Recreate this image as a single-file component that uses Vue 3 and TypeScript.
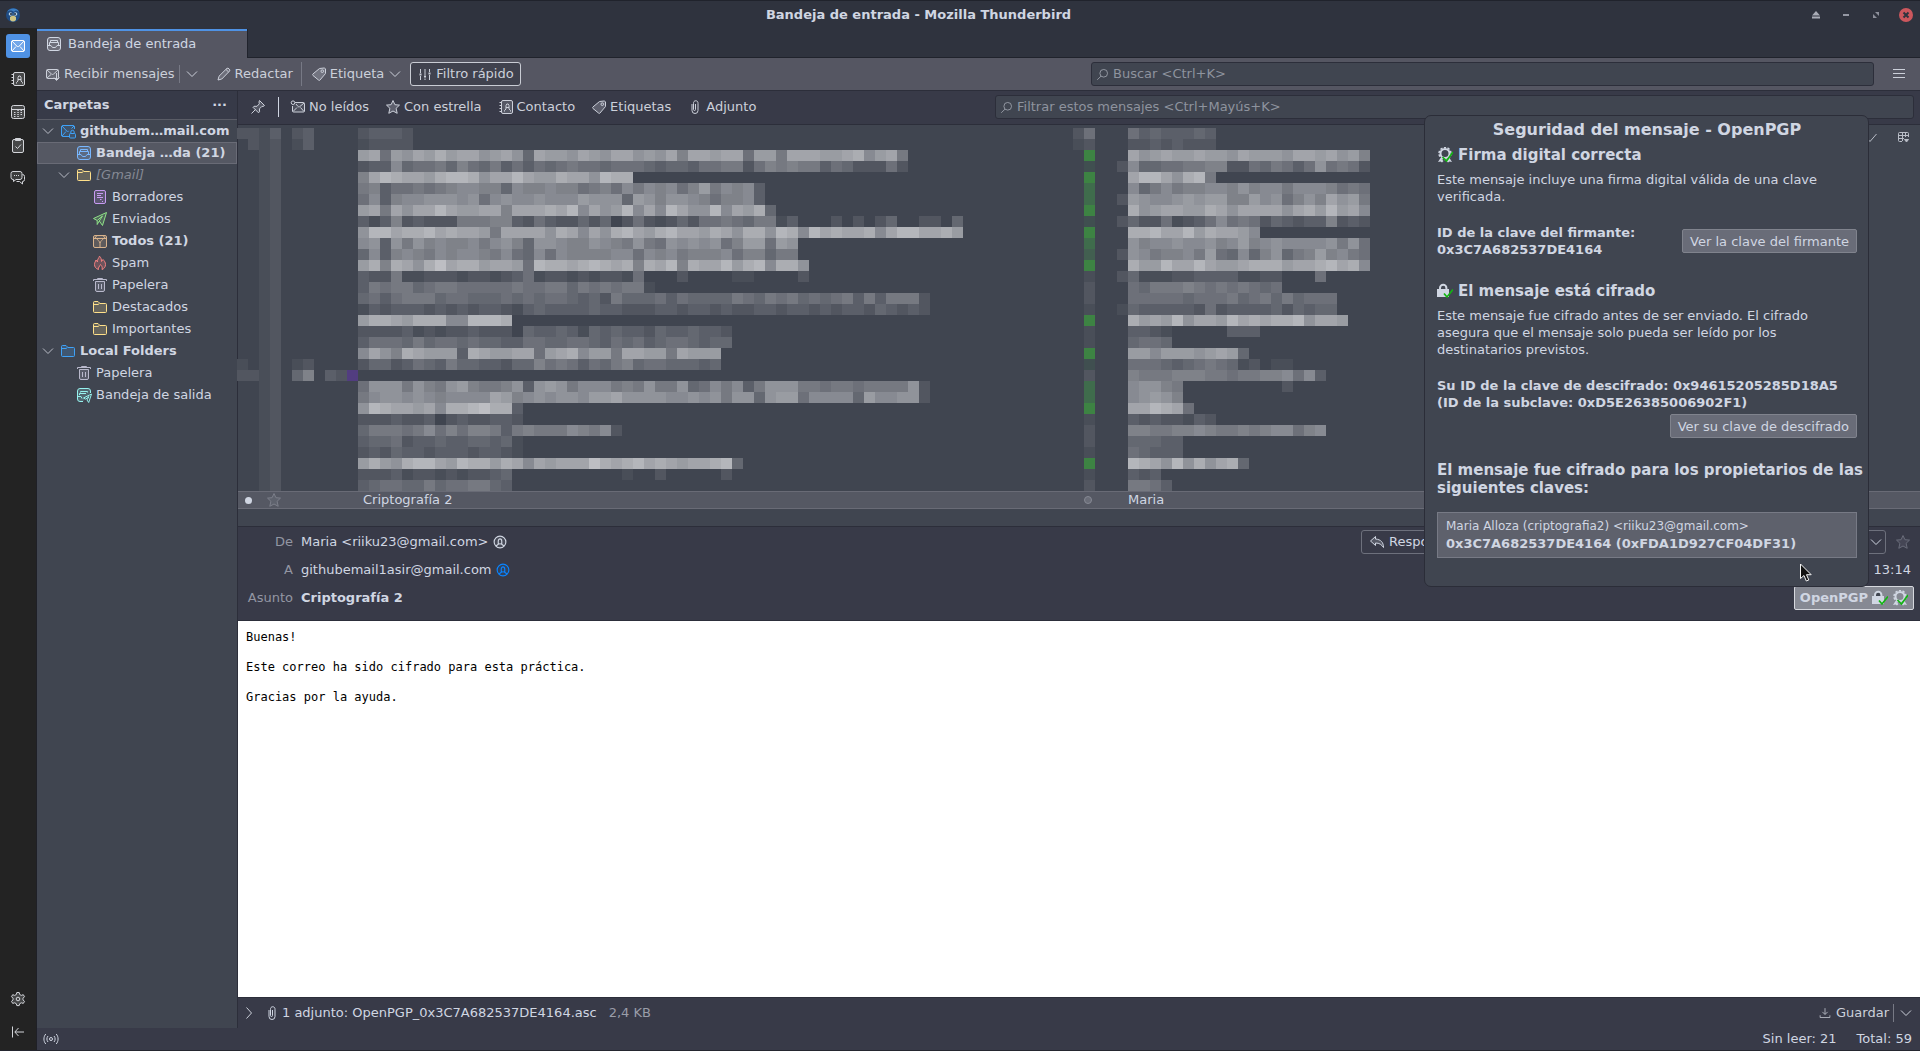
<script setup lang="ts">
import { h } from 'vue'

const glyphs: Record<string, string> = {
  mail: '<rect x="1.5" y="2.5" width="13" height="11" rx="1.5" fill-opacity=".2"/><path d="M2 3l4.7 5c.8.8 1.8.8 2.6 0L14 3M2 13l4-4.500M14 13l-4-4.500" fill="none"/>',
  contacts: '<rect x="3.500" y="1.500" width="11" height="13" rx="1.500" fill-opacity=".2"/><path d="M1.500 3.500h2M1.500 6.500h2M1.500 9.500h2M1.500 12.500h2M6.500 12.500v-1l1.500-1.500V6.500l.8-1.500h1.400l.8 1.500V10l1.500 1.500v1M8 8.500h3" fill="none"/>',
  calendar: '<rect x="1.500" y="1.500" width="13" height="13" rx="2" fill-opacity=".2"/><path d="M2 5.500h12" fill="none"/><path d="M4 8.500h1.500M7.300 8.500h1.500M10.500 8.500H12M4 10.500h1.500M7.300 10.500h1.500M10.500 10.500H12M4 12.500h1.500M7.300 12.500h1.500M7.300 6.500h1.500M10.500 6.500H12" fill="none"/>',
  tasks: '<rect x="2.500" y="2.500" width="11" height="13" rx="1.500" fill-opacity=".2"/><path d="M5.500 3.500v-2h5v2z" /><path d="M5.500 9.500l2 2 3.500-4" fill="none"/>',
  chat: '<path d="M3 1.500h7a2 2 0 0 1 2 2v4a2 2 0 0 1-2 2H6l-2.500 2v-2H3a2 2 0 0 1-2-2v-4a2 2 0 0 1 2-2z" fill-opacity=".15"/><path d="M12.500 4.500a2 2 0 0 1 2 2v3a2 2 0 0 1-2 2v2.500l-3-2.500h-3M4 5.500h1M6 5.500h1M8 5.500h1" fill="none"/>',
  gear: '<path d="M6.800 1.500h2.400l.5 2 1.600.9 2-.7 1.200 2-1.500 1.500v1.700l1.500 1.500-1.200 2-2-.6-1.600.9-.5 1.900H6.800l-.5-1.900-1.600-.9-2 .6-1.200-2L3 8.900V7.200L1.500 5.700l1.200-2 2 .7 1.600-.9z" fill-opacity=".2"/><circle cx="8" cy="8" r="1.800" fill="none"/>',
  collapse: '<path d="M2.500 2.500v11M14 8H5M8.500 4L4.800 8l3.700 4" fill="none"/>',
  inbox: '<rect x="1.500" y="1.500" width="13" height="13" rx="2.500" fill-opacity=".2"/><path d="M1.500 9.500h3.500l1.500 2h3l1.500-2h3.500M3.500 9V6.500h9V9M4.500 6V4.500h7V6" fill="none"/>',
  receive: '<rect x="1.500" y="3.500" width="12" height="9" rx="1" fill-opacity=".15"/><path d="M2 4l4.500 4c.6.600 1.500.600 2.100 0L13 4M2 12l4-3.500M11.500 7v7M9 11.500l2.500 3 3-3" fill="none"/>',
  pencil: '<path d="M2 14l1-3.800L11 2.300c1-.9 3.600 1.500 2.700 2.600L5.800 13 2 14zM10 3.500L12.600 6" fill-opacity=".2"/>',
  tag: '<path d="M8.500 2.500l4.500-.5c.6 0 1.500.5 1.500 1v4.500L9 14c-.5.600-1 .600-1.500 0L2 9.500c-.6-.6-.6-1 0-1.600z" fill-opacity=".25"/><circle cx="11.300" cy="5.200" r="1.300" fill="none"/>',
  filter: '<path d="M3.500 3v4M3.500 10v4M8 3v6M8 12.500V14M12.500 3v3M12.500 9v5" fill="none"/><path d="M2.500 8.500h2M7 10.500h2M11.500 7.500h2" fill="none" stroke-width="2"/>',
  down: '<path d="M3 5.500l5 5 5-5" fill="none"/>',
  right: '<path d="M5.500 2.500l5 5.500-5 5.500" fill="none"/>',
  pin: '<path d="M9.500 1.500l5 5-1.500 1-1-.2-2.500 2.500v3l-1 1L3 8.300l1-1h3l2.300-2.500-.3-1.800zM5.500 10.500L1.500 14.500" fill-opacity=".2"/>',
  unread: '<path d="M5 3.500h8.500c.6 0 1 .4 1 1v7.500c0 .6-.4 1-1 1h-10c-.6 0-1-.4-1-1V7" fill-opacity=".15"/><path d="M6 5l2 2.500c.6.500 1.300.500 1.900 0L14 4M3 12.500l4-4M14 12.500l-3.500-4" fill="none"/><circle cx="3" cy="3.700" r="1.800" fill="none"/>',
  star: '<path d="M8 1.500l1.900 4.200 4.600.4-3.400 3.200 1.100 5L8 12l-4.200 2.300 1.100-5L1.500 6.100l4.600-.4z" fill-opacity=".25"/>',
  clip: '<path d="M8.500 5v5.500a1 1 0 0 1-2 0V4.500a3 3 0 0 1 .5-2c.9-1 2.600-1 3.500 0 .4.500.5 1 .5 2v7a3 3 0 0 1-6 0V5" fill="none"/>',
  search: '<circle cx="9.500" cy="6.500" r="4.700" fill="none"/><path d="M6.200 10L1.500 14.500" fill="none"/>',
  menu: '<path d="M2 3.500h12M2 7.500h12M2 11.500h12" fill="none"/>',
  account: '<path d="M9 13.500H3a1.500 1.500 0 0 1-1.500-1.500V4A1.500 1.500 0 0 1 3 2.500h10A1.500 1.500 0 0 1 14.500 4v2" fill-opacity=".15"/><path d="M2 3l4.700 5c.6.600 1.500.600 2 .200M2 13l4-4.500M14 3l-2.500 2.500" fill="none"/><rect x="9.500" y="10.500" width="6" height="4.500" rx="1" fill-opacity=".15"/><path d="M10.800 10.500V9a1.700 1.700 0 0 1 3.400 0v1.500" fill="none"/>',
  folder: '<path d="M1.500 3.500a1 1 0 0 1 1-1H6l2 2h5.500a1 1 0 0 1 1 1v7a1 1 0 0 1-1 1h-11a1 1 0 0 1-1-1z" fill-opacity=".2"/><path d="M2 5.500h4l1.500-1" fill="none"/>',
  drafts: '<rect x="2.500" y="1.500" width="11" height="13" rx="1.500" fill-opacity=".2"/><path d="M5 4.500h6M5 6.500h4M5 8.500h6M8 10.500h1.500M10 12.500h1" fill="none"/>',
  sent: '<path d="M14.500 1.500L1.500 7.500l3.700 2L10.500 5 7.300 10l3.200 4.500z" fill-opacity=".2"/><path d="M5.200 9.500v4l2-3.500" fill="none"/>',
  archive: '<rect x="1.500" y="2.500" width="13" height="12" rx="1.500" fill-opacity=".2"/><path d="M2 5.500h12M3 5l1.500-2M13 5l-1.500-2M5 5.500c0 2 3 2.500 3 4.500M11 5.500c0 2-3 2.500-3 4.500M8 10v4.500" fill="none"/>',
  spam: '<path d="M6.500 14.500C3.500 13.500 2.500 11.500 2.500 9.500c0-2 1-3 1.500-4.500l1.500 2C5 4.500 7 3 7.500 1.200c1.500 1.300 2 3.300 2 5.300l1.500-2c1.500 1.500 2.500 3 2.500 5 0 2.500-1.500 4.300-3.500 5 .8-2.500-.5-3.500-1.500-5-1 2-2.500 3-2 5z" fill-opacity=".25"/>',
  trash: '<path d="M3.500 4.500h9v8.500a1.500 1.500 0 0 1-1.500 1.500H5A1.500 1.500 0 0 1 3.500 13z" fill-opacity=".2"/><path d="M1.500 4V2.500h13V4M5.500 2V1.500h5V2M6.500 7v5M9.500 7v5" fill="none"/>',
  outbox: '<path d="M7 14.500H4A2.500 2.500 0 0 1 1.500 12V4A2.500 2.500 0 0 1 4 1.500h8A2.500 2.500 0 0 1 14.500 4v2" fill-opacity=".2"/><path d="M2 9.500h3l1 2M3.500 8V6.500H10M4.500 5.500v-1h7v1M15.500 7l-8 4 2.200 1.200L13 9.500l-2 3.500 1.700 2.500z" fill="none"/>',
  person: '<circle cx="8" cy="8" r="6.700" fill-opacity=".1"/><path d="M3.500 12.500l2.500-2V7c0-3.500 4-3.500 4 0v3.500l2.500 2M6 10.500c1.300-.6 2.700-.6 4 0" fill="none"/>',
  reply: '<path d="M6.500 2.500L1.500 7l5 4.500V9c4 0 6 1.500 8 4.500 0-5-2.500-8-8-8.500z" fill-opacity=".2"/>',
  save: '<path d="M8 1.500v8M4.500 6.500L8 10l3.500-3.500M1.500 11v3h13v-3" fill="none"/>',
  sync: '<circle cx="8" cy="8" r="1.500" fill="none"/><path d="M5 5c-1.500 1.800-1.500 4.200 0 6M11 5c1.500 1.800 1.500 4.200 0 6M2.800 3C.3 5.800.3 10.200 2.800 13M13.200 3c2.500 2.800 2.500 7.200 0 10" fill="none"/>',
  columns: '<path d="M7 12.500H4.500a1 1 0 0 1-1-1v-7a1 1 0 0 1 1-1h8a1 1 0 0 1 1 1V8M4 6.500h9M7.500 4v8M10.500 4v4M4 9.500h5" fill="none"/><path d="M9.500 10.500h4L11.500 13z"/>',
  check: '<path d="M6 9.500l3 3L15.500 5" fill="none"/>',
  lock: '<g stroke="none"><path d="M0 6h2V5a4.200 4.200 0 0 1 8.400 0v1H12v8H0z"/></g><path d="M4 6V5a2.200 2.200 0 0 1 4.400 0v1z" stroke="none" fill="#404550"/><path d="M7 10.500l3 3.500L16 6.500" fill="none" stroke="#12b512" stroke-width="1.700"/>',
  seal: '<circle cx="8" cy="6.500" r="4.500" fill="none" stroke-width="2"/><circle cx="8" cy="6.500" r="6" fill="none" stroke-width="1.500" stroke-dasharray="2.300 1.470"/><path d="M1 15l2.500-4 3 3-1.500 1.500-1.500-1zM15 15l-2.500-4-3 3 1.500 1.500 1.500-1z" stroke="none"/><path d="M5.500 10l4 4L16 5" fill="none" stroke="#12b512" stroke-width="1.700"/>'
}

const Icon = (props: { name: string }) =>
  h('svg', { class: 'icon', viewBox: '0 0 16 16', 'aria-hidden': 'true', innerHTML: glyphs[props.name] })
Icon.props = ['name']

const spaces = ['mail', 'contacts', 'calendar', 'tasks', 'chat']

interface Folder { name: string; icon: string; tint: string; level: number; open?: boolean; bold?: boolean; active?: boolean; faded?: boolean }
const folders: Folder[] = [
  { name: 'githubem…mail.com', icon: 'account', tint: '#3fa2f7', level: 0, open: true, bold: true },
  { name: 'Bandeja …da (21)', icon: 'inbox', tint: '#78b7ff', level: 1, bold: true, active: true },
  { name: '[Gmail]', icon: 'folder', tint: '#ffe08a', level: 1, open: true, faded: true },
  { name: 'Borradores', icon: 'drafts', tint: '#c79bf2', level: 2 },
  { name: 'Enviados', icon: 'sent', tint: '#8fe388', level: 2 },
  { name: 'Todos (21)', icon: 'archive', tint: '#d9b38c', level: 2, bold: true },
  { name: 'Spam', icon: 'spam', tint: '#f28080', level: 2 },
  { name: 'Papelera', icon: 'trash', tint: '#b9b9cc', level: 2 },
  { name: 'Destacados', icon: 'folder', tint: '#ffe08a', level: 2 },
  { name: 'Importantes', icon: 'folder', tint: '#ffe08a', level: 2 },
  { name: 'Local Folders', icon: 'folder', tint: '#3fa2f7', level: 0, open: true, bold: true },
  { name: 'Papelera', icon: 'trash', tint: '#b9b9cc', level: 1 },
  { name: 'Bandeja de salida', icon: 'outbox', tint: '#96f2ee', level: 1 }
]

const filters = [
  { name: 'No leídos', icon: 'unread' },
  { name: 'Con estrella', icon: 'star' },
  { name: 'Contacto', icon: 'contacts' },
  { name: 'Etiquetas', icon: 'tag' },
  { name: 'Adjunto', icon: 'clip' }
]

// Censored rows: flag columns | subject | state column | sender column.
// Hex digits are brightness steps, 0 leaves the list background.
const cell = 11
const flagsDefault = '0012'
const censored: [string, string, string, string][] = [
  ['2213023', '23332', '25', '053433343'],
  ['0212013', '12222', '12', '022323222'],
  ['', 'ab5a9bacabb9ab94baa9ba9bb9a9b7bbabb5aa6bbbaabc8ab6', '0G', '0b9abaabaa9baaa9bbab9a7'],
  ['', '23384556475463535456554555434435566257676635422252', '0d', '28445566772254653595652'],
  ['', '7bdcbbacddc9bbdbaacbb9dcc', '0G', '0bddb9cd6'],
  ['', '6735565678877487787756758687857a68783', '0m', '08468677887978868887565'],
  ['', '58378899989589889888a9994a97998757783', '0m', '2a9889a9aa77a895797b9a6'],
  ['', 'ab6b9bbdbaabb7bbbcbd8b9ad8b8db99d8bac4', '0G', '0c9abbaacb9bbbb9bcadab8'],
  ['', '3137232226667732532242402521242556546613000202024002204', '0d', '24225123585652432337232'],
  ['', '9ddbccdbcbba6bbbb9cb8b9cdbacdbbacb9cc9dc8dbcbbc8bddbbca', '0G', '0ccdbbdacbba8'],
  ['', '89396978778689749987798769659898957aa5a9', '0m', '09788988978a78988889695'],
  ['', '4837876878876854858777788587867778577466', '0e', '29867786a548479467a7862'.slice(0, 22) + '5'],
  ['', 'ac7cb9cebccabba5dccbcdcbc7cbd7cbbdacd8cc9', '0G', '0caadbbdbaabcccabbcdbc8'],
  ['', '32261122212212351221212215000200001100002', '01', '2411122333311220005'],
  ['', '365664566555556556646565661', '02', '054666765656545'],
  ['', '4535666455444545455434264445354444654656454563636662', '02', '05555545556456464555'],
  ['', '1323332323233213433334332223323323223323323233243232', '01', '14333332523333424344'],
  ['', 'accbaccc88dddc', '0G', '0cabad9bbadbcbccd9bba'],
  ['', '2222312122322204334314343324334332', '01', '0332100000333'],
  ['', '3555464554544335544554354534554344', '01', '04554'],
  ['', '8b97cbaaa3cbaabb5abc8aa6bbaa6baaa', '0G', '0aa8aaa9aba4'],
  ['1012012', '244235436443324475653546745544434', '0d', '0555434565412011'],
  ['22120470320', '', '02', '0766677766566778583'],
  ['', '599969769a7667939a968886769669458683699966566566669 2'.replace(' ', '').slice(0, 52), '0m', '089976000000000200'],
  ['', '689989878888ba7898998aab99998898969949aa588884a88992', '0m', '089a97'],
  ['', '9dcbbab8ccdecc3', '0G', '0bbdcb5'],
  ['', '222322302322332', '01', '032322132'],
  ['', '466656857577636766687682', '02', '0776677876676788578'],
  ['', '344523343344341', '02', '044433'],
  ['', '232433233323321', '01', '054333'],
  ['', 'aca9cddbadccacb8babbbecbcdbcbabbcd4', '0G', '0dcb9d9c9bc4'],
  ['', '2223122121223400000000001002000002', '01', '0323'],
  ['', '34554464556643', '02', '06653']
]

const states: Record<string, string> = { G: '#3d8343', m: '#3f6c4c', e: '#425f50', d: '#404f50' }
const mix = (a: number, b: number, n: number) => Math.round(a + ((b - a) * n) / 15)
function tone(ch: string) {
  const n = parseInt(ch, 16)
  return `rgb(${mix(64, 198, n)},${mix(69, 199, n)},${mix(80, 203, n)})`
}

const blocks: { x: number; y: number; fill: string }[] = []
censored.forEach(([flags, subject, state, sender], row) => {
  const put = (start: number, text: string) =>
    [...text].forEach((ch, i) => {
      if (ch !== '0') {
        const fill = start === 76 && states[ch] ? states[ch] : tone(ch)
        blocks.push({ x: (start + i) * cell, y: row * cell, fill })
      }
    })
  put(0, flags || flagsDefault)
  put(11, subject)
  put(76, state)
  put(80, sender)
})
blocks.push({ x: 10 * cell, y: 22 * cell, fill: '#523d80' })
</script>

<template>
  <div class="window">
    <header class="titlebar">
      <svg class="logo" viewBox="0 0 16 16" aria-hidden="true">
        <circle cx="8" cy="8" r="7" fill="#1f4c84" />
        <path d="M2 5C4 1 12 0 14 5c-2-2-4-2-5 0C7 3 4 3 2 5z" fill="#3c7fc4" />
        <circle cx="5.500" cy="7" r="1.800" fill="#b9d3e6" />
        <circle cx="10.500" cy="7" r="1.800" fill="#b9d3e6" />
        <circle cx="6" cy="7" r="1" fill="#15243c" />
        <circle cx="10" cy="7" r="1" fill="#15243c" />
        <path d="M5 10c2-2 4-2 6 0v3c-2 2-4 2-6 0z" fill="#cdc384" />
      </svg>
      <h1>Bandeja de entrada - Mozilla Thunderbird</h1>
      <div class="window-buttons">
        <button aria-label="Ocultar"><svg viewBox="0 0 16 16"><path d="M8 4l4 4.500H4zM4 9.500h8v2H4z" fill="#a9acb6" /></svg></button>
        <button aria-label="Minimizar"><svg viewBox="0 0 16 16"><path d="M5 7h6v2H5z" fill="#9598a3" /></svg></button>
        <button aria-label="Maximizar"><svg viewBox="0 0 16 16"><path d="M7 5h4v4zM5 7v4h4z" fill="#8c8f9a" /></svg></button>
        <button aria-label="Cerrar"><svg viewBox="0 0 16 16"><circle cx="8" cy="8" r="7" fill="#cc575d" /><path d="M5.500 5.500l5 5m0-5l-5 5" stroke="#2f343f" stroke-width="2" /></svg></button>
      </div>
    </header>

    <div class="shell">
      <nav class="spaces">
        <button v-for="(s, i) in spaces" :key="s" :class="{ on: i === 0 }" :aria-label="s"><Icon :name="s" /></button>
        <span class="grow"></span>
        <button aria-label="Ajustes"><Icon name="gear" /></button>
        <button aria-label="Contraer"><Icon name="collapse" /></button>
      </nav>

      <div class="workspace">
        <div class="tabs">
          <button class="tab"><Icon name="inbox" />Bandeja de entrada</button>
        </div>

        <div class="toolbar">
          <div class="tools">
            <button class="tool"><Icon name="receive" />Recibir mensajes</button>
            <i class="rule short"></i>
            <button class="tool" aria-label="Más opciones"><Icon name="down" /></button>
            <button class="tool write"><Icon name="pencil" />Redactar</button>
            <i class="rule"></i>
            <button class="tool label"><Icon name="tag" />Etiqueta<Icon name="down" /></button>
            <button class="tool boxed"><Icon name="filter" />Filtro rápido</button>
          </div>
          <label class="field"><Icon name="search" /><input type="text" aria-label="Buscar" placeholder="Buscar &lt;Ctrl+K&gt;" /></label>
          <button class="tool burger" aria-label="Menú"><Icon name="menu" /></button>
        </div>

        <div class="columns">
          <aside class="folders">
            <div class="folders-head"><h2>Carpetas</h2><button aria-label="Opciones">···</button></div>
            <ul>
              <li v-for="(f, i) in folders" :key="i" :class="['l' + f.level, { active: f.active, bold: f.bold, faded: f.faded }]">
                <span class="twisty"><Icon v-if="f.open" name="down" /></span>
                <Icon :name="f.icon" :style="{ color: f.tint }" />
                <span>{{ f.name }}</span>
              </li>
            </ul>
          </aside>

          <main class="mail">
            <div class="quickbar">
              <button class="tool" aria-label="Fijar"><Icon name="pin" /></button>
              <i class="rule bright"></i>
              <div class="filters">
                <button v-for="f in filters" :key="f.name" class="tool"><Icon :name="f.icon" />{{ f.name }}</button>
              </div>
              <label class="field"><Icon name="search" /><input type="text" aria-label="Filtrar" placeholder="Filtrar estos mensajes &lt;Ctrl+Mayús+K&gt;" /></label>
            </div>

            <div class="list">
              <svg class="mosaic" width="1133" height="363" viewBox="0 0 1133 363" shape-rendering="crispEdges" aria-hidden="true">
                <rect v-for="(b, i) in blocks" :key="i" :x="b.x" :y="b.y" :width="cell" :height="cell" :fill="b.fill" />
              </svg>
              <div class="pickers"><Icon name="check" /><Icon name="columns" /></div>
            </div>
            <table class="rows">
              <tbody>
                <tr>
                  <td class="c-dot"><i class="dot"></i></td>
                  <td class="c-star"><Icon name="star" /></td>
                  <td class="c-subject">Criptografía 2</td>
                  <td class="c-state"><i class="ring"></i></td>
                  <td>Maria</td>
                </tr>
              </tbody>
            </table>
            <div class="splitter"></div>

            <section class="head">
              <div class="line">
                <span class="key">De</span><span>Maria &lt;riiku23@gmail.com&gt;</span><Icon name="person" />
                <span class="grow"></span>
                <div class="actions">
                  <button class="answer"><Icon name="reply" /><span>Respo</span></button>
                  <button class="more" aria-label="Más"><Icon name="down" /></button>
                </div>
                <Icon name="star" class="fav" />
              </div>
              <div class="line">
                <span class="key">A</span><span>githubemail1asir@gmail.com</span><Icon name="person" class="known" />
                <span class="grow"></span><time>13:14</time>
              </div>
              <div class="line">
                <span class="key">Asunto</span><strong>Criptografía 2</strong>
                <span class="grow"></span>
                <button class="pgp">OpenPGP<Icon name="lock" /><Icon name="seal" /></button>
              </div>
            </section>

            <article class="body">
              <p>Buenas!</p>
              <p>Este correo ha sido cifrado para esta práctica.</p>
              <p>Gracias por la ayuda.</p>
            </article>

            <footer class="attach">
              <button class="tool" aria-label="Mostrar"><Icon name="right" /></button>
              <Icon name="clip" class="clip" />
              <span>1 adjunto: OpenPGP_0x3C7A682537DE4164.asc</span>
              <span class="size">2,4 KB</span>
              <span class="grow"></span>
              <button class="tool save"><Icon name="save" />Guardar</button>
              <i class="rule short"></i>
              <button class="tool" aria-label="Más opciones"><Icon name="down" /></button>
            </footer>
          </main>
        </div>

        <div class="status"><Icon name="sync" /><span class="grow"></span><span>Sin leer: 21</span><span>Total: 59</span></div>
      </div>
    </div>

    <section class="popup">
      <h2>Seguridad del mensaje - OpenPGP</h2>
      <h3><Icon name="seal" />Firma digital correcta</h3>
      <p>Este mensaje incluye una firma digital válida de una clave verificada.</p>
      <div class="signer">
        <p class="id">ID de la clave del firmante:<br />0x3C7A682537DE4164</p>
        <button>Ver la clave del firmante</button>
      </div>
      <h3><Icon name="lock" />El mensaje está cifrado</h3>
      <p>Este mensaje fue cifrado antes de ser enviado. El cifrado asegura que el mensaje solo pueda ser leído por los destinatarios previstos.</p>
      <p class="id own">Su ID de la clave de descifrado: 0x94615205285D18A5<br />(ID de la subclave: 0xD5E26385006902F1)</p>
      <button class="right">Ver su clave de descifrado</button>
      <h4>El mensaje fue cifrado para los propietarios de las siguientes claves:</h4>
      <div class="keybox">
        <span>Maria Alloza (criptografia2) &lt;riiku23@gmail.com&gt;</span>
        <strong>0x3C7A682537DE4164 (0xFDA1D927CF04DF31)</strong>
      </div>
    </section>
    <svg class="cursor" viewBox="0 0 12 19" aria-hidden="true"><path d="M.5 1v14.500L4 12.500 6.300 18l2.500-1-2.300-5.300h4.700z" fill="#111" stroke="#f4f4f4" /></svg>
  </div>
</template>

<style>
body { margin: 0; background: #383a48; }
</style>

<style scoped>
* { box-sizing: border-box; }
.window { position: relative; display: flex; flex-direction: column; min-height: 100vh; overflow: hidden; font: 13px/16px "DejaVu Sans", sans-serif; color: #d0d6e2; background: #383a48; border-bottom: 1px solid #24262f; }
button { font: inherit; color: inherit; background: none; border: 0; padding: 0; margin: 0; display: flex; align-items: center; white-space: nowrap; }
h1, h2, h3, h4, p, ul { margin: 0; padding: 0; }
.icon { width: 16px; height: 16px; flex: none; fill: currentColor; stroke: currentColor; stroke-width: 1; }
.grow { flex: 1; }

.titlebar { display: flex; align-items: center; height: 28px; padding: 0 6px 0 5px; background: #2f333e; border-top: 1px solid #20232c; }
.logo { width: 16px; height: 16px; }
.titlebar h1 { flex: 1; text-align: center; font-size: 13px; padding-left: 8px; }
.window-buttons { display: flex; gap: 14px; }
.window-buttons svg { width: 16px; height: 16px; display: block; }

.shell { flex: 1; display: flex; }
.spaces { flex: none; width: 37px; display: flex; flex-direction: column; align-items: center; gap: 9px; padding: 6px 1px 6px 0; background: #232323; border-right: 1px solid #1f2027; }
.spaces button { width: 24px; height: 24px; justify-content: center; border-radius: 3px; color: #d3d5da; }
.spaces .on { background: #4f92e4; color: #fff; }
.workspace { flex: 1; min-width: 0; display: flex; flex-direction: column; }

.tabs { display: flex; height: 30px; padding-top: 1px; background: #2f333e; }
.tab { width: 210px; padding: 0 9px 2px; gap: 6px; background: #555662; border-top: 2px solid #4f92e4; }
.tabs::after { content: ""; flex: 1; border-bottom: 1px solid #20232c; border-left: 1px solid #20232c; }
.toolbar { display: flex; align-items: center; height: 33px; padding: 0 13px 0 8px; background: #555662; border-bottom: 1px solid #2c2e3a; }
.tools { flex: none; width: 1046px; display: flex; align-items: center; }
.tool { gap: 3px; color: #ccd0da; }
.rule { width: 1px; height: 24px; background: #777985; }
.rule.short { height: 18px; margin: 0 4px; }
.write { margin: 0 8px 0 16px; }
.label { margin: 0 7px 0 9px; }
.boxed { height: 24px; padding: 0 6px; border: 1px solid #c9ccd4; border-radius: 3px; background: #40424e; }
.field { flex: 1; display: flex; align-items: center; gap: 4px; height: 24px; padding: 0 4px; background: #404550; border: 1px solid #2c2e3a; border-radius: 3px; color: #a3a8b2; }
.field .icon { width: 13px; height: 13px; }
.field input { flex: 1; border: 0; padding: 0; background: none; font: inherit; color: inherit; outline: none; }
.field input::placeholder { color: #8e939e; opacity: 1; }
.burger { margin-left: 17px; }

.columns { flex: 1; display: flex; min-height: 0; }
.folders { flex: none; width: 201px; background: #404550; border-right: 1px solid #2c2e3a; }
.folders-head { display: flex; justify-content: space-between; align-items: center; height: 29px; padding: 0 10px 1px 7px; background: #373a48; border-bottom: 1px solid #5a5c66; }
.folders-head h2 { font-size: 13px; }
.folders-head button { font-weight: bold; }
.folders ul { list-style: none; }
.folders li { display: flex; align-items: center; height: 22px; white-space: nowrap; gap: 4px; border: 1px solid transparent; }
.twisty { width: 16px; height: 16px; flex: none; margin-left: 2px; color: #b9bcc6; }
.l0 { padding-left: 0; }
.l1 { padding-left: 16px; }
.l2 { padding-left: 32px; }
.folders li.active { background: #555863; border-color: #696b76; }
.bold { font-weight: bold; }
.faded { font-style: italic; color: #858994; }

.mail { flex: 1; min-width: 0; display: flex; flex-direction: column; background: #404550; }
.quickbar { display: flex; align-items: center; height: 34px; padding: 0 6px 1px 12px; background: #383a48; border-bottom: 1px solid #2c2e3a; }
.rule.bright { height: 20px; margin: 0 11px 0 12px; background: #d0d6e2; }
.filters { width: 705px; flex: none; display: flex; gap: 16px; }
.list { display: flex; justify-content: space-between; padding-top: 3px; height: 366px; }
.mosaic { display: block; flex: none; margin-left: -1px; }
.pickers { display: flex; gap: 18px; padding: 1px 9px 0 0; color: #b9bdc7; }
.rows { width: 100%; height: 18px; table-layout: fixed; border-collapse: collapse; background: #555863; border-top: 1px solid #696b76; border-bottom: 1px solid #696b76; }
.rows td { padding: 0; height: 16px; line-height: 16px; }
.c-dot { width: 28px; }
.c-star { width: 97px; color: #7c7f8a; }
.c-star .icon { display: block; }
.c-subject { width: 720px; }
.c-state { width: 45px; }
.dot { display: block; width: 7px; height: 7px; margin-left: 7px; border-radius: 50%; background: #d0d6e2; }
.ring { display: block; width: 8px; height: 8px; margin-left: 1px; border-radius: 50%; background: #6a6d78; border: 1px solid #868994; }
.splitter { height: 18px; border-bottom: 1px solid #2c2e3a; }

.head { display: flex; flex-direction: column; gap: 4px; height: 94px; padding: 3px 6px 8px 0; background: #383a48; border-bottom: 1px solid #2c2e3a; }
.line { display: flex; align-items: center; height: 24px; white-space: nowrap; }
.key { width: 55px; margin-right: 8px; text-align: right; color: #9396a3; }
.line > .icon { width: 14px; height: 14px; margin-left: 4px; stroke-width: 1.3; }
.line > .known { color: #0a84ff; }
.line > .fav { width: 16px; height: 16px; margin: 0 3px 0 9px; stroke-width: 1; color: #6a6d7b; }
.actions { display: flex; justify-content: space-between; width: 525px; }
.actions button { height: 24px; padding: 0 7px; gap: 4px; border: 1px solid #6d707c; border-radius: 3px; }
.actions .answer { width: 96px; }
.actions .more { width: 50px; justify-content: flex-end; padding-right: 1px; }
.line time { margin-right: 3px; }
.pgp { height: 24px; padding: 0 5px; gap: 4px; font-weight: bold; border: 1px solid #d6d8de; border-radius: 2px; background: #868993; }

.body { flex: 1; padding: 9px 8px; background: #fff; color: #000; font: 12px/15px "DejaVu Sans Mono", monospace; }
.body p { margin-bottom: 15px; }
.attach { display: flex; align-items: center; height: 31px; padding: 0 6px 0 3px; background: #383a48; border-top: 1px solid #2c2e3a; }
.attach .clip { margin: 0 2px 0 7px; }
.attach .size { margin-left: 12px; color: #9a9da8; }
.save .icon { width: 12px; height: 12px; margin-right: 2px; }
.status { display: flex; align-items: center; gap: 20px; height: 22px; padding: 0 8px 0 6px; }

.popup { position: absolute; top: 115px; right: 51px; width: 445px; height: 472px; padding: 5px 11px 0 12px; background: #404550; border: 1px solid #2b2d38; border-radius: 7px; line-height: 17px; }
.popup h2 { text-align: center; font-size: 16px; line-height: 18px; }
.popup h3 { display: flex; align-items: center; gap: 5px; height: 18px; font-size: 15px; margin: 7px 0; }
.popup p.id { font-weight: bold; }
.popup button { height: 24px; padding: 0 7px; background: #696c78; border: 1px solid #80838d; border-radius: 2px; }
.signer { display: flex; align-items: center; justify-content: space-between; margin: 19px 0 24px; }
.own { margin-top: 19px; }
.popup .right { margin: 3px 0 0 auto; }
.popup h4 { font-size: 15px; line-height: 18px; margin: 23px -8px 15px 0; }
.keybox { display: flex; flex-direction: column; height: 46px; padding: 4px 8px; line-height: 18px; background: #5e616c; border: 1px solid #777a85; }
.keybox span { font-size: 12px; }
.cursor { position: absolute; top: 563px; right: 108px; width: 12px; height: 19px; }
</style>
